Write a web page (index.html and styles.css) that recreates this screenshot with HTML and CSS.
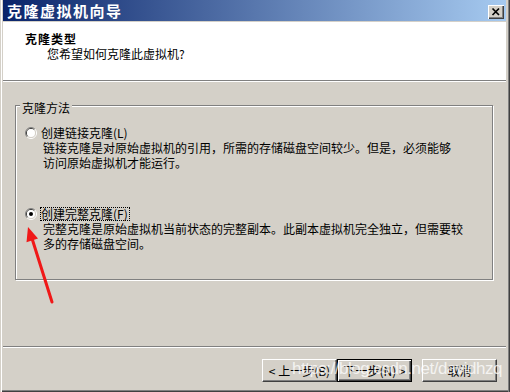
FILE: index.html
```html
<!DOCTYPE html>
<html>
<head>
	<meta charset="UTF-8">
	<title>克隆虚拟机向导</title>
	<link rel="stylesheet" href="styles.css">
</head>
<body>
	<div id="wizard">
		<div class="titlebar">
			<span class="title">克隆虚拟机向导</span>
			<span class="close_btn">
				<svg width="16" height="14" viewBox="0 0 16 14">
					<path d="M4.5 3.5 L11 10 M11 3.5 L4.5 10" stroke="#000" stroke-width="1.7" fill="none"/>
				</svg>
			</span>
		</div>

		<div class="header">
			<div class="header_title">克隆类型</div>
			<div class="header_sub">您希望如何克隆此虚拟机?</div>
		</div>
		<hr class="sep">

		<div class="content">
			<fieldset class="group">
				<legend>克隆方法</legend>

				<div class="option">
					<div class="option_row">
						<svg class="radio" width="12" height="12" viewBox="0 0 12 12">
							<path d="M9.9 2.1 A5.5 5.5 0 0 0 2.1 9.9" stroke="#808080" fill="none"/>
							<path d="M2.1 9.9 A5.5 5.5 0 0 0 9.9 2.1" stroke="#fff" fill="none"/>
							<path d="M9.2 2.8 A4.5 4.5 0 0 0 2.8 9.2" stroke="#404040" fill="none"/>
							<path d="M2.8 9.2 A4.5 4.5 0 0 0 9.2 2.8" stroke="#d4d0c8" fill="none"/>
							<circle cx="6" cy="6" r="4" fill="#fff"/>
						</svg>
						<span class="option_label">创建链接克隆(L)</span>
					</div>
					<p class="option_desc">链接克隆是对原始虚拟机的引用，所需的存储磁盘空间较少。但是，必须能够<br>访问原始虚拟机才能运行。</p>
				</div>

				<div class="option option_second">
					<div class="option_row">
						<svg class="radio" width="12" height="12" viewBox="0 0 12 12">
							<path d="M9.9 2.1 A5.5 5.5 0 0 0 2.1 9.9" stroke="#808080" fill="none"/>
							<path d="M2.1 9.9 A5.5 5.5 0 0 0 9.9 2.1" stroke="#fff" fill="none"/>
							<path d="M9.2 2.8 A4.5 4.5 0 0 0 2.8 9.2" stroke="#404040" fill="none"/>
							<path d="M2.8 9.2 A4.5 4.5 0 0 0 9.2 2.8" stroke="#d4d0c8" fill="none"/>
							<circle cx="6" cy="6" r="4" fill="#fff"/>
							<circle cx="6" cy="6" r="2" fill="#000"/>
						</svg>
						<span class="option_label focused">创建完整克隆(F)</span>
					</div>
					<p class="option_desc">完整克隆是原始虚拟机当前状态的完整副本。此副本虚拟机完全独立，但需要较<br>多的存储磁盘空间。</p>
				</div>
			</fieldset>
		</div>
		<hr class="sep">

		<div class="footer">
			<button class="btn">&lt; 上一步(B)</button>
			<button class="btn btn_default">下一步(N) &gt;</button>
			<button class="btn btn_cancel">取消</button>
		</div>

		<!-- annotation drawn over the screenshot -->
		<svg class="arrow" width="510" height="392" viewBox="0 0 510 392">
			<line x1="52" y1="302" x2="32.5" y2="240" stroke="#f01818" stroke-width="3" stroke-linecap="round"/>
			<polygon points="28,227 38,238.5 26.5,242.2" fill="#f01818"/>
		</svg>
		<div class="watermark">https://blog.csdn.net/davidhzq</div>
	</div>
</body>
</html>
```

FILE: styles.css
```css
*{
	margin: 0;
	padding: 0;
}
body{
	font-family: "Noto Sans CJK SC", "Liberation Sans", sans-serif;
	font-size: 12px;
	color: #000;
}
#wizard{
	width: 510px;
	height: 392px;
	box-sizing: border-box;
	padding: 0 4px 3px 3px;
	background: #d4d0c8;
	position: relative;
	display: flex;
	flex-direction: column;
	box-shadow: inset 1px 0 #d4d0c8, inset 2px 0 #fff,
		inset -1px 0 #404040, inset -2px 0 #808080,
		inset 0 -1px #404040, inset 0 -2px #808080;
}
.titlebar{
	height: 21px;
	box-sizing: border-box;
	padding-top: 3px;
	margin-bottom: 1px;
	display: flex;
	align-items: center;
	justify-content: space-between;
	background: linear-gradient(to right, #0a246a, #a6caf0);
}
.title{
	color: #fff;
	font-weight: bold;
	font-size: 15px;
	letter-spacing: 1.5px;
	line-height: 16px;
	padding-left: 4px;
	margin-top: -3px;
}
.close_btn{
	display: block;
	width: 16px;
	height: 14px;
	margin-right: 2px;
	background: #d4d0c8;
	box-sizing: border-box;
	box-shadow: inset 1px 1px #fff, inset -1px -1px #404040, inset -2px -2px #808080;
}
.close_btn svg{
	display: block;
}
.header{
	height: 58px;
	box-sizing: border-box;
	background: #fff;
	padding: 9px 0 0 22px;
	line-height: 15px;
}
.header_title{
	font-weight: bold;
	letter-spacing: 1px;
}
.header_sub{
	padding-left: 22px;
}
.sep{
	border: 0;
	height: 0;
	border-top: 1px solid #808080;
	border-bottom: 1px solid #fff;
}
.content{
	height: 264px;
	box-sizing: border-box;
	padding: 14px 0 0 12px;
}
.group{
	width: 478px;
	height: 184px;
	box-sizing: border-box;
	border: 1px solid #808080;
	box-shadow: inset 1px 1px #fff, 1px 1px #fff;
	padding: 0;
}
.group legend{
	margin-left: 4px;
	padding: 5px 2px 0 2px;
	line-height: 14px;
	background: #d4d0c8;
}
.option{
	padding-left: 9px;
	margin-top: 10px;
	line-height: 15px;
}
.option_second{
	margin-top: 36px;
}
.option_row{
	display: flex;
	align-items: center;
	height: 15px;
}
.radio{
	display: block;
	flex: none;
}
.option_label{
	margin-left: 3px;
	border: 1px solid transparent;
	line-height: 12px;
	padding-right: 1px;
}
.focused{
	border: 1px dotted #000;
}
.option_desc{
	margin-left: 18px;
	white-space: nowrap;
}
.footer{
	flex: 1;
	display: flex;
	justify-content: flex-end;
	align-items: flex-start;
	padding: 11px 9px 0 0;
}
.btn{
	width: 75px;
	height: 23px;
	box-sizing: border-box;
	font-family: inherit;
	font-size: 12px;
	line-height: 14px;
	color: #000;
	background: #d4d0c8;
	border: 1px solid;
	border-color: #fff #404040 #404040 #fff;
	box-shadow: inset -1px -1px #808080;
}
.btn_default{
	border: 1px solid #000;
	box-shadow: inset 1px 1px #fff, inset -1px -1px #404040, inset -2px -2px #808080;
}
.btn_cancel{
	margin-left: 10px;
}
.arrow{
	position: absolute;
	left: 0;
	top: 0;
	pointer-events: none;
}
.watermark{
	position: absolute;
	left: 292px;
	top: 359px;
	font-family: "Liberation Sans", sans-serif;
	font-size: 17px;
	letter-spacing: -0.5px;
	color: rgba(255,255,255,0.75);
	pointer-events: none;
}
```
